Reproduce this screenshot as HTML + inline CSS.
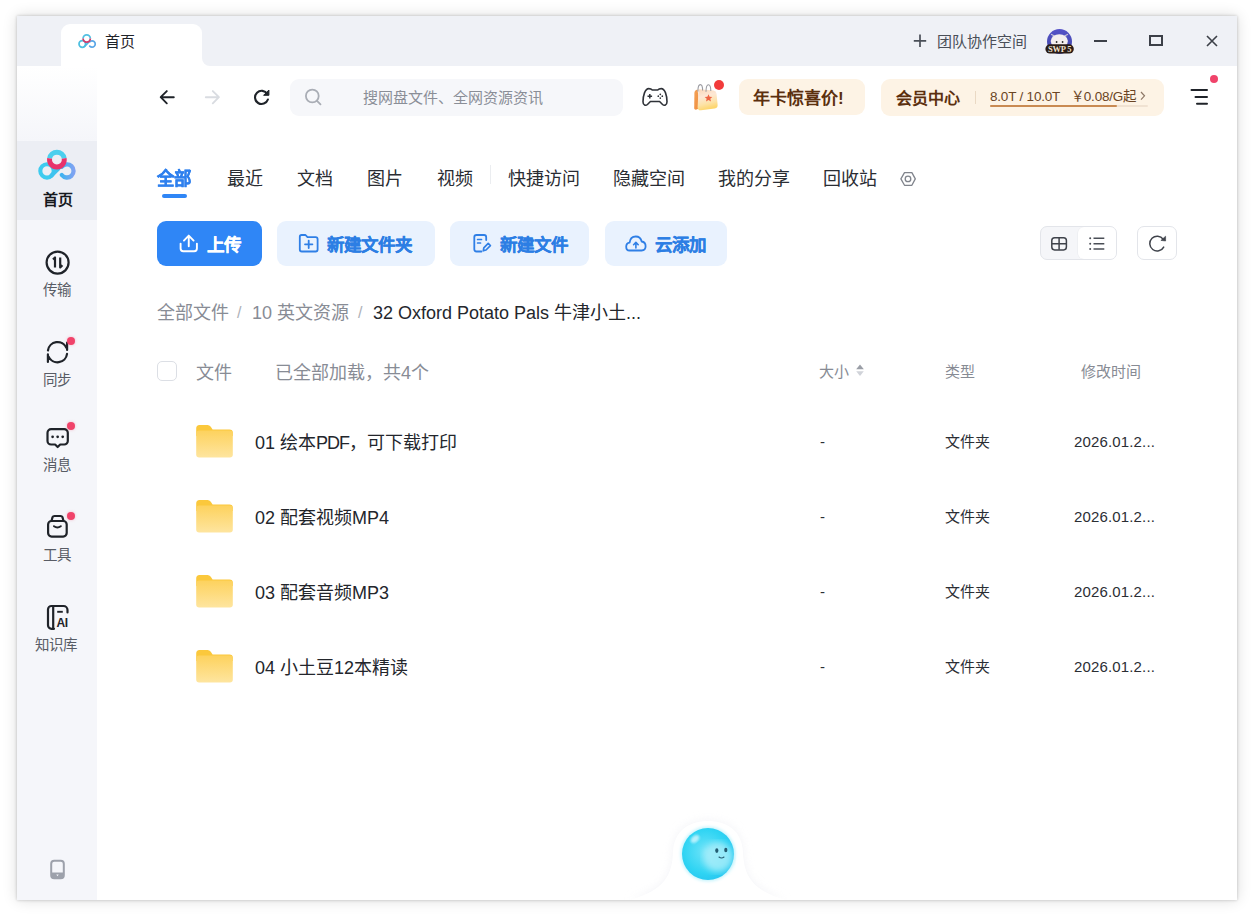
<!DOCTYPE html>
<html lang="zh-CN">
<head>
<meta charset="utf-8">
<style>
html,body{margin:0;padding:0;}
body{width:1257px;height:922px;position:relative;overflow:hidden;background:#fff;font-family:"Liberation Sans",sans-serif;color:#1f2329;}
.a{position:absolute;}
.t{position:absolute;white-space:nowrap;line-height:1;}
#win{position:absolute;left:17px;top:16px;width:1220px;height:884px;background:#fff;box-shadow:0 0 3px rgba(0,0,0,0.22),0 0 14px rgba(0,0,0,0.14);}
#titlebar{position:absolute;left:17px;top:16px;width:1220px;height:50px;background:#eff1f6;}
#tab{position:absolute;left:61px;top:24px;width:141px;height:42px;background:#fff;border-radius:9px 9px 0 0;}
#sidebar{position:absolute;left:17px;top:66px;width:80px;height:834px;background:#f5f6fa;}
#sidetop{position:absolute;left:17px;top:66px;width:80px;height:75px;background:linear-gradient(#fff,#f5f6fa);}
#sel{position:absolute;left:17px;top:141px;width:80px;height:79px;background:#eceef4;}
.side{font-size:15px;color:#585c65;}
.dot{position:absolute;width:8px;height:8px;border-radius:50%;background:#f0436a;box-shadow:0 0 3px rgba(240,67,106,0.35);}
.tabtxt{font-size:18px;color:#2a2d33;}
.btn{position:absolute;top:221px;height:45px;border-radius:9px;background:#e9f2fe;}
.btntxt{font-size:17.5px;font-weight:bold;color:#2c7ee4;-webkit-text-stroke:0.25px #2c7ee4;}
.hdr{font-size:15px;color:#878b94;}
.row{font-size:18px;color:#23262c;}
.cell{font-size:15px;color:#2b2e34;}
</style>
</head>
<body>
<div id="win"></div>
<div id="titlebar"></div>
<div id="tab"></div>
<div class="a" style="left:200px;top:54px;width:10px;height:12px;background:#fff"></div>
<div class="a" style="left:202px;top:40px;width:20px;height:26px;background:#eff1f6;border-bottom-left-radius:8px"></div>
<div id="sidebar"></div>
<div id="sidetop"></div>
<div id="sel"></div>

<!-- tab content -->
<svg class="a" style="left:74px;top:30px" width="26" height="22" viewBox="74 30 26 22">
  <circle cx="82.3" cy="44" r="3.3" fill="none" stroke="#4dbfe0" stroke-width="1.7"/>
  <path d="M84.6 46.3 L88.2 42.7" stroke="#4db8e0" stroke-width="1.7" stroke-linecap="round"/>
  <path d="M89.6 41.9 A3.2 3.2 0 1 1 89.7 46.2" fill="none" stroke="#5aa6e6" stroke-width="1.7" stroke-linecap="round"/>
  <path d="M83.1 38.5 A3.6 3.6 0 0 1 90.3 38.5" fill="none" stroke="#52c0e2" stroke-width="1.8"/>
  <path d="M90.3 38.5 A3.6 3.6 0 1 1 83.1 38.5" fill="none" stroke="#d23a6c" stroke-width="1.8"/>
</svg>
<div class="t" style="left:105px;top:34px;font-size:15px;color:#1f2329">首页</div>

<!-- title bar right -->
<svg class="a" style="left:910px;top:31px" width="20" height="20" viewBox="910 31 20 20">
  <path d="M913.8 40.8 H926.2 M920 34.6 V47" stroke="#4a4f58" stroke-width="1.7"/>
</svg>
<div class="t" style="left:937px;top:34px;font-size:15px;color:#4a4f58">团队协作空间</div>
<svg class="a" style="left:1043px;top:27px" width="34" height="30" viewBox="1043 27 34 30">
  <defs><linearGradient id="avg" x1="0" y1="0" x2="0" y2="1"><stop offset="0" stop-color="#5552c8"/><stop offset="1" stop-color="#3f46a6"/></linearGradient></defs>
  <circle cx="1059.5" cy="41.5" r="12.5" fill="url(#avg)"/>
  <path d="M1051.5 34.5 L1054.5 36 M1067.5 34.5 L1064.5 36" stroke="#c9c3d6" stroke-width="1.3" stroke-linecap="round"/><ellipse cx="1059.3" cy="41" rx="8.6" ry="6.8" fill="#f4efef"/>
  <circle cx="1056.6" cy="42" r="0.9" fill="#2a2a2a"/><circle cx="1062.6" cy="42" r="0.9" fill="#2a2a2a"/>
  <rect x="1045.4" y="44.3" width="28.4" height="9.2" rx="4.6" fill="#2a1d17"/>
  <text x="1059.6" y="52" text-anchor="middle" font-family="Liberation Serif" font-size="8.5" font-weight="bold" fill="#f1e2cf" letter-spacing="-0.2">SWP 5</text>
</svg>
<div class="a" style="left:1094px;top:40px;width:13px;height:2px;background:#3c4048"></div>
<div class="a" style="left:1149px;top:35px;width:10px;height:7px;border:2px solid #3c4048"></div>
<svg class="a" style="left:1206px;top:35px" width="12" height="12" viewBox="0 0 12 12"><path d="M1 1 L11 11 M11 1 L1 11" stroke="#3c4048" stroke-width="1.6"/></svg>


<!-- sidebar items -->
<svg class="a" style="left:34px;top:146px" width="46" height="38" viewBox="34 146 46 38">
  <defs><linearGradient id="rg" x1="0" y1="0" x2="1" y2="0"><stop offset="0" stop-color="#3fb2f0"/><stop offset="1" stop-color="#7fa3f2"/></linearGradient></defs>
  <g id="logo">
  <circle cx="47" cy="170.9" r="6.7" fill="none" stroke="#3ecbef" stroke-width="4.1"/><path d="M51.4 175.5 L58.5 168.6" fill="none" stroke="#3ec3ef" stroke-width="4.1" stroke-linecap="round"/>
  <path d="M61.9 166.7 A6.6 6.6 0 1 1 61.8 175" fill="none" stroke="url(#rg)" stroke-width="4.3" stroke-linecap="round"/>
  <path d="M49.61 158.31 A7.4 7.4 0 0 1 64.19 158.31" fill="none" stroke="#4bcfee" stroke-width="4.9"/>
  <path d="M64.19 158.31 A7.4 7.4 0 1 1 49.61 158.31" fill="none" stroke="#e8336b" stroke-width="4.9"/>
  </g>
</svg>
<div class="t" style="left:42.5px;top:192px;font-size:15px;font-weight:bold;color:#15181d">首页</div>

<svg class="a" style="left:44px;top:249px" width="28" height="28" viewBox="0 0 28 28">
  <circle cx="13.6" cy="13.6" r="11" fill="none" stroke="#1f2329" stroke-width="2.2"/>
  <path d="M9 10.5 L11 8.5 V18.5" fill="none" stroke="#1f2329" stroke-width="2.2" stroke-linejoin="round"/>
  <path d="M16.2 8.5 V18.5 L18.4 16.3" fill="none" stroke="#1f2329" stroke-width="2.2" stroke-linejoin="round"/>
</svg>
<div class="t side" style="left:42.5px;top:282.5px;font-size:14.5px">传输</div>

<svg class="a" style="left:44px;top:338px" width="28" height="28" viewBox="0 0 28 28">
  <path d="M3.95 12.5 A9.7 9.7 0 0 1 22.4 9.8 M23.1 4.6 V12" fill="none" stroke="#1f2329" stroke-width="2.2" stroke-linecap="round" stroke-linejoin="round"/>
  <path d="M23.05 15.9 A9.7 9.7 0 0 1 4.6 18.6 M3.9 16.4 V24" fill="none" stroke="#1f2329" stroke-width="2.2" stroke-linecap="round" stroke-linejoin="round"/>
</svg>
<div class="dot" style="left:67px;top:337px"></div>
<div class="t side" style="left:42.5px;top:372.5px;font-size:14.5px">同步</div>

<svg class="a" style="left:44px;top:425px" width="28" height="26" viewBox="0 0 28 26">
  <path d="M7.1 4.1 H20.2 A3.6 3.6 0 0 1 23.8 7.7 V15.9 A3.6 3.6 0 0 1 20.2 19.5 H16.2 L13.65 22 L11.1 19.5 H7.1 A3.6 3.6 0 0 1 3.5 15.9 V7.7 A3.6 3.6 0 0 1 7.1 4.1 Z" fill="none" stroke="#1f2329" stroke-width="2.2" stroke-linejoin="round"/>
  <circle cx="8.6" cy="11.8" r="1.35" fill="#1f2329"/><circle cx="13.65" cy="11.8" r="1.35" fill="#1f2329"/><circle cx="18.7" cy="11.8" r="1.35" fill="#1f2329"/>
</svg>
<div class="dot" style="left:67px;top:422px"></div>
<div class="t side" style="left:42.5px;top:457.5px;font-size:14.5px">消息</div>

<svg class="a" style="left:44px;top:513px" width="28" height="28" viewBox="0 0 28 28">
  <rect x="4.1" y="8" width="18.6" height="15.6" rx="3.5" fill="none" stroke="#1f2329" stroke-width="2.2"/>
  <path d="M7.5 8 L8.5 4.2 Q9 3 10.5 3 H16.5 Q18 3 18.5 4.2 L19.5 8" fill="none" stroke="#1f2329" stroke-width="2.2" stroke-linejoin="round"/>
  <path d="M10 13.2 Q13.4 15.6 16.8 13.2" fill="none" stroke="#1f2329" stroke-width="2" stroke-linecap="round"/>
</svg>
<div class="dot" style="left:67px;top:512px"></div>
<div class="t side" style="left:42.5px;top:547.5px;font-size:14.5px">工具</div>

<svg class="a" style="left:44px;top:603px" width="28" height="30" viewBox="0 0 28 30">
  <path d="M10 25.8 H7.5 A3.5 3.5 0 0 1 4 22.3 V6.5 A3.5 3.5 0 0 1 7.5 3 H19.5 A4 4 0 0 1 23.5 7 V9.5" fill="none" stroke="#1f2329" stroke-width="2.2" stroke-linecap="round"/>
  <path d="M9.2 3.5 V26" fill="none" stroke="#1f2329" stroke-width="2.2"/>
  <path d="M13.2 8.8 H18.8" stroke="#1f2329" stroke-width="1.9"/>
  <text x="12.4" y="24.2" font-family="Liberation Sans" font-weight="bold" font-size="12" fill="#1f2329" letter-spacing="-0.3">AI</text>
</svg>
<div class="t side" style="left:34.5px;top:637.5px;font-size:14.5px">知识库</div>

<svg class="a" style="left:49px;top:858.5px" width="18" height="22" viewBox="0 0 18 22">
  <rect x="2.2" y="1.8" width="12.6" height="17.5" rx="3" fill="#f5f6fa" stroke="#9da1ab" stroke-width="2"/>
  <path d="M2 13.5 H15 V16.5 A3 3 0 0 1 12 19.5 H5 A3 3 0 0 1 2 16.5 Z" fill="#9da1ab"/>
  <path d="M7.3 15.6 H9.7 L8.5 17.2 Z" fill="#f5f6fa"/>
</svg>


<!-- toolbar -->
<svg class="a" style="left:155px;top:85px" width="24" height="24" viewBox="155 85 24 24">
  <path d="M173.8 97.2 H160.8 M166.8 91.1 L160.7 97.2 L166.8 103.3" fill="none" stroke="#1f2329" stroke-width="1.9" stroke-linecap="round" stroke-linejoin="round"/>
</svg>
<svg class="a" style="left:200px;top:85px" width="24" height="24" viewBox="200 85 24 24">
  <path d="M205.8 97.2 H218.8 M212.8 91.1 L218.9 97.2 L212.8 103.3" fill="none" stroke="#d9dce1" stroke-width="1.9" stroke-linecap="round" stroke-linejoin="round"/>
</svg>
<svg class="a" style="left:249px;top:85px" width="24" height="24" viewBox="249 85 24 24">
  <path d="M267.3 94 A6.6 6.6 0 1 0 267.9 99.5" fill="none" stroke="#1f2329" stroke-width="2.1" stroke-linecap="round"/>
  <path d="M268.9 90 V95.3 H263.6 Z" fill="#1f2329" stroke="#1f2329" stroke-width="1" stroke-linejoin="round"/>
</svg>
<div class="a" style="left:290px;top:79px;width:333px;height:37px;border-radius:9px;background:#f6f7fa"></div>
<svg class="a" style="left:302px;top:86px" width="24" height="24" viewBox="302 86 24 24">
  <circle cx="312.3" cy="96" r="6.4" fill="none" stroke="#a9adb5" stroke-width="1.8"/>
  <path d="M317 100.8 L320.5 104.3" stroke="#a9adb5" stroke-width="1.8" stroke-linecap="round"/>
</svg>
<div class="t" style="left:363px;top:90px;font-size:15px;color:#8a8e97">搜网盘文件、全网资源资讯</div>

<!-- gamepad -->
<svg class="a" style="left:640px;top:84px" width="30" height="26" viewBox="640 84 30 26">
  <path d="M648.8 88.6 Q651 88.6 652.3 90 H657.7 Q659 88.6 661.2 88.6 C665 88.6 667 95.5 667 101.8 C667 105.4 664.3 106.2 662.3 104.2 L659.6 101.5 H650.4 L647.7 104.2 C645.7 106.2 643 105.4 643 101.8 C643 95.5 645 88.6 648.8 88.6 Z" fill="none" stroke="#2f3238" stroke-width="1.6" stroke-linejoin="round"/>
  <path d="M647.5 96.2 H652.1 M649.8 93.9 V98.5" stroke="#2f3238" stroke-width="1.5"/>
  <circle cx="660.3" cy="94.3" r="0.85" fill="#2f3238"/><circle cx="660.3" cy="98.1" r="0.85" fill="#2f3238"/>
  <circle cx="658.3" cy="96.2" r="0.85" fill="#2f3238"/><circle cx="662.3" cy="96.2" r="0.85" fill="#2f3238"/>
</svg>
<!-- calendar bag -->
<svg class="a" style="left:690px;top:80px" width="36" height="34" viewBox="690 80 36 34">
  <defs><linearGradient id="bagg" x1="0" y1="0" x2="0.25" y2="1"><stop offset="0" stop-color="#fbd6b6"/><stop offset="0.4" stop-color="#fde8d6"/><stop offset="0.75" stop-color="#fde2a6"/><stop offset="1" stop-color="#fdd66e"/></linearGradient>
  <linearGradient id="bagf" x1="0" y1="0" x2="1" y2="1"><stop offset="0" stop-color="#f4a257"/><stop offset="1" stop-color="#ee8a3a"/></linearGradient></defs>
  <path d="M697.5 89.5 Q694.5 90 694.4 93 L694.2 108.5 Q694.5 110 696.5 109.5 L700 108 Z" fill="url(#bagf)"/>
  <path d="M698.5 89.2 L713.5 90.5 Q716.2 90.8 716.5 93.5 L717.6 104.5 Q718 108 714.8 108.6 L701 110.3 Q697.8 110.6 697.6 107.5 Z" fill="url(#bagg)"/>
  
  <path d="M697.9 91.5 Q697.9 84.6 700.3 84.6 Q702.6 84.6 702.6 90.5 M706 91.8 Q706 84.8 708.4 84.8 Q710.8 84.8 710.8 91" fill="none" stroke="#9a9aa0" stroke-width="1.1"/>
  <path d="M708.5 94.2 L709.6 96.8 L712.3 97 L710.3 98.8 L711 101.5 L708.5 100 L706 101.5 L706.7 98.8 L704.7 97 L707.4 96.8 Z" fill="#ee6444"/>
</svg>
<div class="a" style="left:714px;top:80px;width:10px;height:10px;border-radius:50%;background:#f23b3b"></div>
<!-- promo -->
<div class="a" style="left:739px;top:79px;width:126px;height:36px;border-radius:9px;background:#fdf3e5"></div>
<div class="t" style="left:753px;top:90px;font-size:17px;font-weight:bold;color:#5b2f0e">年卡惊喜价!</div>
<div class="a" style="left:881px;top:79px;width:283px;height:37px;border-radius:9px;background:#fdf3e5"></div>
<div class="t" style="left:896px;top:91px;font-size:16px;font-weight:bold;color:#5b2f0e">会员中心</div>
<div class="a" style="left:975px;top:91px;width:1px;height:13px;background:#ead9c4"></div>
<div class="t" style="left:990px;top:90px;font-size:13.5px;color:#6b4524;letter-spacing:-0.2px">8.0T / 10.0T</div>
<div class="t" style="left:1071px;top:90px;font-size:13.5px;color:#6b4524;letter-spacing:-0.2px">￥0.08/G起</div>
<svg class="a" style="left:1138px;top:89px" width="10" height="14" viewBox="0 0 10 14"><path d="M3 3 L6.5 6.8 L3 10.6" fill="none" stroke="#8d7766" stroke-width="1.2"/></svg>
<div class="a" style="left:990px;top:105px;width:158px;height:2px;background:#f0e2d2;border-radius:1px"></div>
<div class="a" style="left:990px;top:105px;width:127px;height:2px;background:#c98a52;border-radius:1px"></div>
<!-- menu -->
<svg class="a" style="left:1188px;top:86px" width="22" height="22" viewBox="1188 86 22 22">
  <path d="M1191.5 90 H1207 M1195.5 96.9 H1207 M1197 103.7 H1207" stroke="#1f2329" stroke-width="2" stroke-linecap="round"/>
</svg>
<div class="a" style="left:1210px;top:75px;width:8px;height:8px;border-radius:50%;background:#f0436a"></div>


<!-- category tabs -->
<div class="t" style="left:157px;top:170px;font-size:18px;font-weight:bold;color:#2f80ee;-webkit-text-stroke:0.3px #2f80ee;transform:scaleX(0.97);transform-origin:left">全部</div>
<div class="a" style="left:162px;top:194px;width:25px;height:4px;border-radius:2px;background:#2f86f6"></div>
<div class="t tabtxt" style="left:227px;top:170px">最近</div>
<div class="t tabtxt" style="left:297px;top:170px">文档</div>
<div class="t tabtxt" style="left:367px;top:170px">图片</div>
<div class="t tabtxt" style="left:437px;top:170px">视频</div>
<div class="a" style="left:490px;top:165px;width:1px;height:19px;background:#ebedf0"></div>
<div class="t tabtxt" style="left:508px;top:170px">快捷访问</div>
<div class="t tabtxt" style="left:613px;top:170px">隐藏空间</div>
<div class="t tabtxt" style="left:718px;top:170px">我的分享</div>
<div class="t tabtxt" style="left:823px;top:170px">回收站</div>
<svg class="a" style="left:898px;top:169px" width="20" height="20" viewBox="898 169 20 20">
  <path d="M900.9 178.9 L904.5 172.6 H911.9 L915.3 178.9 L911.9 185.3 H904.5 Z" fill="none" stroke="#80848c" stroke-width="1.3" stroke-linejoin="round"/>
  <circle cx="908" cy="178.9" r="2.8" fill="none" stroke="#80848c" stroke-width="1.3"/>
</svg>

<!-- action buttons -->
<div class="btn" style="left:157px;width:105px;background:#2f86f6"></div>
<svg class="a" style="left:176px;top:232px" width="26" height="24" viewBox="176 232 26 24">
  <path d="M180.6 243.6 V248.6 Q180.6 251.3 183.3 251.3 H194.2 Q196.9 251.3 196.9 248.6 V243.6" fill="none" stroke="#fff" stroke-width="1.9" stroke-linecap="round"/>
  <path d="M188.75 246.2 V235.8 M183.9 240.6 L188.75 235.6 L193.6 240.6" fill="none" stroke="#fff" stroke-width="1.9" stroke-linecap="round" stroke-linejoin="round"/>
</svg>
<div class="t" style="left:207px;top:237px;font-size:17.5px;font-weight:bold;color:#fff;-webkit-text-stroke:0.25px #fff">上传</div>

<div class="btn" style="left:277px;width:158px"></div>
<svg class="a" style="left:296px;top:232px" width="26" height="24" viewBox="296 232 26 24">
  <path d="M299.8 238 V236.8 Q299.8 235 301.6 235 H305.5 L307.5 237.2 H315.6 Q317.6 237.2 317.6 239.2 V249.5 Q317.6 251.5 315.6 251.5 H301.8 Q299.8 251.5 299.8 249.5 Z" fill="none" stroke="#2f7fe6" stroke-width="1.8" stroke-linejoin="round"/>
  <path d="M308.7 240.6 V248 M305 244.3 H312.4" stroke="#2f7fe6" stroke-width="1.8" stroke-linecap="round"/>
</svg>
<div class="t btntxt" style="left:327px;top:237px">新建文件夹</div>

<div class="btn" style="left:450px;width:139px"></div>
<svg class="a" style="left:470px;top:232px" width="24" height="24" viewBox="470 232 24 24">
  <path d="M481.5 251.5 H476.5 Q474.3 251.5 474.3 249.3 V237.2 Q474.3 235 476.5 235 H484 Q486.2 235 486.2 237.2 V240" fill="none" stroke="#2f7fe6" stroke-width="1.8" stroke-linecap="round"/>
  <path d="M477.6 239.5 H481.5 M477.6 243 H480.5" stroke="#2f7fe6" stroke-width="1.7" stroke-linecap="round"/>
  <path d="M483.3 250.8 L483.8 247.8 L488.2 243.4 L490.4 245.6 L486 250 Z" fill="none" stroke="#2f7fe6" stroke-width="1.7" stroke-linejoin="round"/>
</svg>
<div class="t btntxt" style="left:500px;top:237px">新建文件</div>

<div class="btn" style="left:605px;width:122px"></div>
<svg class="a" style="left:622px;top:232px" width="28" height="24" viewBox="622 232 28 24">
  <path d="M631 250.5 H629.5 Q626.2 250.5 626.2 246.7 Q626.2 243.2 629.6 242.7 Q630.3 236.5 635.8 236.5 Q640.5 236.5 641.7 241.5 Q645.6 242 645.6 246.3 Q645.6 250.5 641.6 250.5 Z" fill="none" stroke="#2f7fe6" stroke-width="1.8" stroke-linejoin="round"/>
  <path d="M635.9 248 V242.5 M633.6 244.7 L635.9 242.4 L638.2 244.7" fill="none" stroke="#2f7fe6" stroke-width="1.6" stroke-linecap="round" stroke-linejoin="round"/>
</svg>
<div class="t btntxt" style="left:655px;top:237px">云添加</div>

<!-- view toggles -->
<div class="a" style="left:1040px;top:226px;width:75px;height:32px;border:1px solid #e3e5ea;border-radius:7px;background:#f5f6f9;overflow:hidden">
  <div class="a" style="left:37px;top:0;width:38px;height:32px;background:#fff;border-radius:6px 0 0 6px;box-shadow:-0.5px 0 0 #e8eaee"></div>
</div>
<svg class="a" style="left:1049px;top:235px" width="20" height="18" viewBox="1049 235 20 18">
  <rect x="1051.8" y="237.7" width="14.6" height="12.2" rx="2.8" fill="none" stroke="#3f434b" stroke-width="1.5"/>
  <path d="M1059.1 237.9 V249.7 M1052 243.8 H1066.2" stroke="#3f434b" stroke-width="1.5"/>
</svg>
<svg class="a" style="left:1087px;top:235px" width="20" height="18" viewBox="1087 235 20 18">
  <circle cx="1090.2" cy="238.3" r="1" fill="#4a4e56"/><circle cx="1090.2" cy="243.7" r="1" fill="#4a4e56"/><circle cx="1090.2" cy="249" r="1" fill="#4a4e56"/>
  <path d="M1093.5 238.3 H1104.3 M1093.5 243.7 H1104.3 M1093.5 249 H1104.3" stroke="#4a4e56" stroke-width="1.5"/>
</svg>
<div class="a" style="left:1137px;top:226px;width:38px;height:32px;border:1px solid #e3e5ea;border-radius:7px;background:#fff"></div>
<svg class="a" style="left:1146px;top:233px" width="22" height="22" viewBox="1146 233 22 22">
  <path d="M1163.2 239.3 A7.4 7.4 0 1 0 1163.7 247.1" fill="none" stroke="#3f434b" stroke-width="1.5" stroke-linecap="round"/>
  <path d="M1165.6 236.2 L1165.6 241 L1160.9 240.4 Z" fill="#3f434b" stroke="#3f434b" stroke-width="0.6" stroke-linejoin="round"/>
</svg>

<!-- breadcrumb -->
<div class="t" style="left:157px;top:303.5px;font-size:18px;color:#888c95">全部文件</div>
<div class="t" style="left:237px;top:305px;font-size:16px;color:#aeb1b8">/</div>
<div class="t" style="left:252px;top:303.5px;font-size:18px;color:#888c95">10 英文资源</div>
<div class="t" style="left:358px;top:305px;font-size:16px;color:#aeb1b8">/</div>
<div class="t" style="left:373px;top:303.5px;font-size:18px;color:#24272d">32 Oxford Potato Pals 牛津小土...</div>

<!-- list header -->
<div class="a" style="left:157px;top:361px;width:18px;height:18px;border:1px solid #dcdfe5;border-radius:5px;background:#fff"></div>
<div class="t" style="left:196px;top:364px;font-size:18px;color:#888c95">文件</div>
<div class="t" style="left:275px;top:364px;font-size:18px;color:#888c95">已全部加载，共4个</div>
<div class="t hdr" style="left:819px;top:364px">大小</div>
<svg class="a" style="left:854px;top:362px" width="12" height="18" viewBox="854 362 12 18">
  <path d="M856.2 369.3 L860 364.6 L863.8 369.3 Z" fill="#9a9ea6"/>
  <path d="M856.2 371.2 L860 375.9 L863.8 371.2 Z" fill="#d0d3d9"/>
</svg>
<div class="t hdr" style="left:944.5px;top:364px">类型</div>
<div class="t hdr" style="left:1080.5px;top:364px">修改时间</div>


<!-- rows -->
<svg width="0" height="0" style="position:absolute"><defs><linearGradient id="fbody" x1="0" y1="0" x2="0" y2="1"><stop offset="0" stop-color="#fdd25e"/><stop offset="1" stop-color="#fee59f"/></linearGradient></defs></svg>
<svg class="a" style="left:194px;top:424px" width="42" height="36" viewBox="0 0 42 36">
  <path d="M2.2 4.5 Q2.2 1 5.5 1 H13.5 Q15.5 1 16.8 2.8 L18.6 5.4 H35.5 Q38.8 5.4 38.8 8.7 V12 H2.2 Z" fill="#fbc83c"/>
  <rect x="2.2" y="6.6" width="36.6" height="26.9" rx="3" fill="url(#fbody)"/>
</svg>
<div class="t row" style="left:255px;top:433.5px">01 绘本<span style="letter-spacing:-1px">PDF</span>，可下载打印</div>
<div class="t cell" style="left:820px;top:434px">-</div>
<div class="t cell" style="left:945px;top:434px">文件夹</div>
<div class="t cell" style="left:1074px;top:434px;letter-spacing:0.15px">2026.01.2...</div>
<svg class="a" style="left:194px;top:499px" width="42" height="36" viewBox="0 0 42 36">
  <path d="M2.2 4.5 Q2.2 1 5.5 1 H13.5 Q15.5 1 16.8 2.8 L18.6 5.4 H35.5 Q38.8 5.4 38.8 8.7 V12 H2.2 Z" fill="#fbc83c"/>
  <rect x="2.2" y="6.6" width="36.6" height="26.9" rx="3" fill="url(#fbody)"/>
</svg>
<div class="t row" style="left:255px;top:508.5px">02 配套视频MP4</div>
<div class="t cell" style="left:820px;top:509px">-</div>
<div class="t cell" style="left:945px;top:509px">文件夹</div>
<div class="t cell" style="left:1074px;top:509px;letter-spacing:0.15px">2026.01.2...</div>
<svg class="a" style="left:194px;top:574px" width="42" height="36" viewBox="0 0 42 36">
  <path d="M2.2 4.5 Q2.2 1 5.5 1 H13.5 Q15.5 1 16.8 2.8 L18.6 5.4 H35.5 Q38.8 5.4 38.8 8.7 V12 H2.2 Z" fill="#fbc83c"/>
  <rect x="2.2" y="6.6" width="36.6" height="26.9" rx="3" fill="url(#fbody)"/>
</svg>
<div class="t row" style="left:255px;top:583.5px">03 配套音频MP3</div>
<div class="t cell" style="left:820px;top:584px">-</div>
<div class="t cell" style="left:945px;top:584px">文件夹</div>
<div class="t cell" style="left:1074px;top:584px;letter-spacing:0.15px">2026.01.2...</div>
<svg class="a" style="left:194px;top:649px" width="42" height="36" viewBox="0 0 42 36">
  <path d="M2.2 4.5 Q2.2 1 5.5 1 H13.5 Q15.5 1 16.8 2.8 L18.6 5.4 H35.5 Q38.8 5.4 38.8 8.7 V12 H2.2 Z" fill="#fbc83c"/>
  <rect x="2.2" y="6.6" width="36.6" height="26.9" rx="3" fill="url(#fbody)"/>
</svg>
<div class="t row" style="left:255px;top:658.5px">04 小土豆12本精读</div>
<div class="t cell" style="left:820px;top:659px">-</div>
<div class="t cell" style="left:945px;top:659px">文件夹</div>
<div class="t cell" style="left:1074px;top:659px;letter-spacing:0.15px">2026.01.2...</div>

<!-- assistant bubble -->
<svg class="a" style="left:600px;top:800px" width="216" height="100" viewBox="600 800 216 100">
  <defs>
    <filter id="mshadow" x="-30%" y="-30%" width="160%" height="160%"><feGaussianBlur stdDeviation="5"/></filter>
    <radialGradient id="ball" cx="0.45" cy="0.45" r="0.6"><stop offset="0" stop-color="#6fe3f8"/><stop offset="0.7" stop-color="#2fd4f3"/><stop offset="1" stop-color="#27c6f0"/></radialGradient><filter id="bblur"><feGaussianBlur stdDeviation="3"/></filter><filter id="bblur2"><feGaussianBlur stdDeviation="1"/></filter><filter id="bglow" x="-20%" y="-20%" width="140%" height="140%"><feGaussianBlur stdDeviation="1.5"/></filter>
  </defs>
  <path d="M630 900 C665 890 672 875 673 852 C674 830 690 821 708 821 C726 821 742 830 743 852 C744 875 751 890 786 900 Z" fill="#e8e9f0" filter="url(#mshadow)" opacity="0.55"/>
  <path d="M630 900 C665 890 672 875 673 852 C674 830 690 821 708 821 C726 821 742 830 743 852 C744 875 751 890 786 900 Z" fill="#fff"/>
  <circle cx="708" cy="854" r="27.5" fill="#c8f4fc" filter="url(#bglow)"/>
  <circle cx="708" cy="854" r="26" fill="url(#ball)"/>
  <ellipse cx="718" cy="857" rx="15" ry="15" fill="#b5f0fb" opacity="0.75" filter="url(#bblur)"/>
  <ellipse cx="695" cy="839" rx="5" ry="3.2" fill="#e8fbff" opacity="0.7" transform="rotate(-40 695 839)" filter="url(#bblur2)"/>
  <ellipse cx="716.8" cy="850.6" rx="1.6" ry="2.3" fill="#245c72"/>
  <ellipse cx="725.8" cy="850" rx="1.6" ry="2.3" fill="#245c72"/>
  <path d="M719 857 Q721.5 859 724 857" fill="none" stroke="#245c72" stroke-width="1.1" stroke-linecap="round"/>
</svg>

</body>
</html>
